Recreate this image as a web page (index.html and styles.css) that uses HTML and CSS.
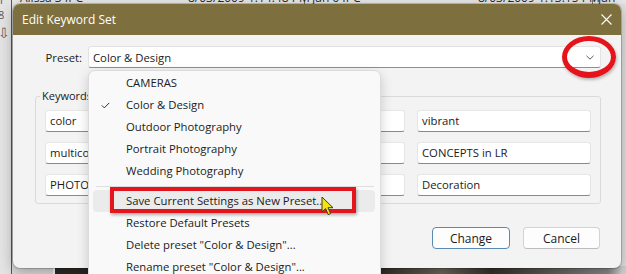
FILE: index.html
```html
<!DOCTYPE html>
<html lang="en">
<head>
    <meta charset="UTF-8">
    <meta name="viewport" content="width=device-width, initial-scale=1.0">
    <title>Edit Keyword Set</title>
    <link rel="stylesheet" href="styles.css">
</head>
<body>
    <div class="desktop">
        <!-- library grid behind the dialog -->
        <div class="side">
            <span>1</span>
            <span>8</span>
            <span>⇩</span>
        </div>
        <div class="pane">
            <div class="list-row">
                <span class="cell c1">Alissa 3 IPC</span>
                <span class="cell c2">8/03/2009 1:14:48 PM</span>
                <span class="cell c3">Jan 6 IPC</span>
                <span class="cell c4">8/03/2009 1:13:15 PM</span>
                <span class="cell c5">Jan</span>
            </div>
            <div class="blank"></div>
            <div class="photos"></div>
        </div>

        <div class="dialog">
            <div class="titlebar">
                <span>Edit Keyword Set</span>
                <span class="close">
                    <svg width="11" height="11" viewBox="0 0 11 11"><path d="M0.5 0.5 L10.5 10.5 M10.5 0.5 L0.5 10.5" stroke="#fff" stroke-width="1.1" fill="none"/></svg>
                </span>
            </div>
            <div class="dialog-body">
                <div class="preset-row">
                    <label class="preset-label">Preset:</label>
                    <div class="combo">
                        <span>Color &amp; Design</span>
                        <svg class="chevron" width="8" height="5" viewBox="0 0 8 5"><path d="M0.5 0.8 L4 4.2 L7.5 0.8" stroke="#5a5a5a" stroke-width="1" fill="none"/></svg>
                    </div>
                </div>

                <fieldset class="keywords">
                    <legend>Keywords</legend>
                    <div class="kw-grid">
                        <div class="kw">color</div>
                        <div class="kw">design</div>
                        <div class="kw">vibrant</div>
                        <div class="kw">multicolor</div>
                        <div class="kw">creative</div>
                        <div class="kw">CONCEPTS in LR</div>
                        <div class="kw">PHOTOGRAPHY</div>
                        <div class="kw">ART</div>
                        <div class="kw">Decoration</div>
                    </div>
                </fieldset>

                <div class="buttons">
                    <button class="btn primary">Change</button>
                    <button class="btn">Cancel</button>
                </div>
            </div>
        </div>

        <div class="menu">
            <div class="item">CAMERAS</div>
            <div class="item checked">
                <svg class="check" width="9" height="7" viewBox="0 0 9 7"><path d="M0.8 3.4 L3.3 5.9 L8.2 0.9" stroke="#333" stroke-width="1" fill="none"/></svg>
                Color &amp; Design
            </div>
            <div class="item">Outdoor Photography</div>
            <div class="item">Portrait Photography</div>
            <div class="item">Wedding Photography</div>
            <div class="separator"></div>
            <div class="item hover">
                Save Current Settings as New Preset...
                <span class="mark-box"></span>
            </div>
            <div class="item">Restore Default Presets</div>
            <div class="item">Delete preset "Color &amp; Design"...</div>
            <div class="item">Rename preset "Color &amp; Design"...</div>
        </div>

        <div class="mark-ring"></div>

        <svg class="cursor" width="14" height="21" viewBox="0 0 14 21">
            <path d="M1 1 L1 16 L4.6 12.6 L7.2 18.6 L9.6 17.6 L7 11.7 L12 11.7 Z" fill="#f2e313" stroke="#3a3a2a" stroke-width="1" stroke-linejoin="round"/>
        </svg>
    </div>
</body>
</html>
```

FILE: styles.css
```css
* {
    box-sizing: border-box;
}

html, body {
    margin: 0;
    padding: 0;
}

body {
    width: 626px;
    height: 274px;
    overflow: hidden;
    font-family: 'Open Sans', 'Noto Sans', sans-serif;
    font-size: 11.3px;
    color: #1b1b1b;
    background-color: #e2e2e2;
}

.desktop {
    position: relative;
    width: 626px;
    height: 274px;
    display: flex;
}

/* background library view */
.side {
    width: 12px;
    border-right: 1px solid #555;
    background-color: #e4e4e4;
    display: flex;
    flex-direction: column;
    color: #555;
    font-size: 11px;
    line-height: 12px;
    overflow: hidden;
}

.side span {
    margin-left: -2px;
}

.side span:nth-child(1) {
    margin-top: -6px;
}

.side span:nth-child(2) {
    margin-top: 3px;
}

.side span:nth-child(3) {
    margin-top: 5px;
    font-size: 14px;
    line-height: 14px;
}

.pane {
    flex: 1;
    display: flex;
    flex-direction: column;
}

.list-row {
    height: 4px;
    overflow: hidden;
    display: flex;
    background-color: #e6e6e6;
    font-size: 12px;
    line-height: 12px;
    color: #2a2a2a;
}

.cell {
    margin-top: -8px;
    white-space: nowrap;
}

.c1 { margin-left: 8px; width: 168px; }
.c2 { width: 117px; border-right: 1px solid #777; }
.c3 { margin-left: 7px; width: 166px; }
.c4 { width: 115px; border-right: 1px solid #777; }
.c5 { margin-left: 5px; }

.blank {
    flex: 1;
    background-color: #e0e0e0;
}

.photos {
    height: 8px;
    background: linear-gradient(to right, #dcdcdc 0 41px, #fafafa 41px 43px, #2e2925 43px 300px, #5b554c 320px, #2a2622 360px, #6d675c 430px, #34302b 480px, #8a8a88 596px, #cfcfcf 610px);
}

/* dialog window */
.dialog {
    position: absolute;
    left: 13px;
    top: 4px;
    width: 608px;
    height: 264px;
    background-color: #f3f3f3;
    border-radius: 7px;
    overflow: hidden;
    box-shadow: 0 0 0 1px rgba(0,0,0,0.18), 0 4px 14px rgba(0,0,0,0.3);
}

.titlebar {
    height: 31px;
    background-color: #7e6f3e;
    color: #fff;
    display: flex;
    align-items: center;
    justify-content: space-between;
    padding-left: 9px;
    font-size: 12px;
}

.close {
    width: 29px;
    display: flex;
    justify-content: center;
}

.dialog-body {
    padding: 11px 20px 0 0;
}

.preset-row {
    display: flex;
    align-items: center;
}

.preset-label {
    width: 75px;
    padding-right: 6px;
    text-align: right;
}

.combo {
    flex: 1;
    height: 22px;
    display: flex;
    align-items: center;
    justify-content: space-between;
    padding: 0 6px 0 4px;
    background-color: #fff;
    border: 1px solid #e3e3e3;
    border-bottom-color: #8f8f8f;
    border-radius: 3px;
}

.keywords {
    margin: 22px 0 0 22px;
    padding: 8px 9px 7px 9px;
    border: 1px solid #dadada;
    border-radius: 3px;
}

.keywords legend {
    padding: 0 2px;
    margin-left: -5px;
    line-height: 12px;
    font-size: 11px;
}

.kw-grid {
    display: grid;
    grid-template-columns: repeat(3, 1fr);
    column-gap: 12px;
    row-gap: 10px;
}

.kw {
    height: 22px;
    line-height: 20px;
    padding-left: 4px;
    background-color: #fff;
    border: 1px solid #e6e6e6;
    border-bottom-color: #8a8a8a;
    border-radius: 3px;
    white-space: nowrap;
    overflow: hidden;
}

.buttons {
    display: flex;
    justify-content: flex-end;
    gap: 13px;
    margin-top: 23px;
    padding-right: 1px;
}

.btn {
    width: 77px;
    height: 22px;
    padding: 0;
    font-family: inherit;
    font-size: 12px;
    color: #1b1b1b;
    background-color: #fdfdfd;
    border: 1px solid #d3d3d3;
    border-bottom-color: #bdbdbd;
    border-radius: 4px;
}

.btn.primary {
    width: 78px;
    border-color: #5a8ab4;
}

/* popup list of the combo */
.menu {
    position: absolute;
    left: 88px;
    top: 70px;
    width: 293px;
    height: 230px;
    padding-top: 1px;
    background-color: #f9f9f9;
    border: 1px solid #dcdcdc;
    border-radius: 7px;
    box-shadow: 0 4px 12px rgba(0,0,0,0.18);
}

.item {
    position: relative;
    height: 22px;
    line-height: 22px;
    margin: 0 5px 0 4px;
    padding-left: 33px;
    border-radius: 4px;
    white-space: nowrap;
}

.item.hover {
    background-color: #ebebeb;
}

.check {
    position: absolute;
    left: 8px;
    top: 8px;
}

.separator {
    height: 8px;
    margin: 0 6px 0 7px;
    background: linear-gradient(#dedede, #dedede) center / 100% 1px no-repeat;
}

/* red annotations drawn over the screenshot */
.mark-box {
    position: absolute;
    left: 17px;
    top: -3px;
    width: 246px;
    height: 26px;
    border: 4px solid #e2161c;
    box-shadow: 1px 2px 3px rgba(0,0,0,0.3);
}

.mark-ring {
    position: absolute;
    left: 562px;
    top: 36px;
    width: 54px;
    height: 42px;
    border: 5px solid #e5141b;
    border-bottom-width: 6px;
    border-radius: 50%;
    box-shadow: 1px 2px 3px rgba(0,0,0,0.25);
}

.cursor {
    position: absolute;
    left: 321px;
    top: 196px;
}
```
